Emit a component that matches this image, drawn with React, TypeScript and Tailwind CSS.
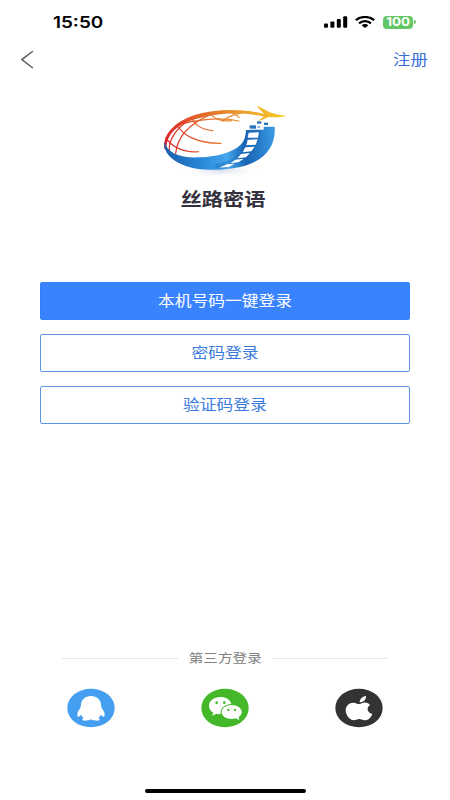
import type { ReactNode } from "react";

function StatusBar() {
  return (
    <div className="h-11 flex items-end justify-between pl-[53px] pr-[34px] pb-[13px] text-black">
      <span className="font-['Inter'] text-[16px] leading-[18px] font-semibold origin-left scale-x-[1.18]">
        15:50
      </span>
      <div className="flex items-center h-[18px]">
        <svg width="24" height="12" viewBox="0 0 24 12" fill="currentColor" aria-hidden="true">
          <rect x="0" y="7.4" width="4" height="4.3" rx="1" />
          <rect x="6.4" y="5.4" width="4" height="6.3" rx="1" />
          <rect x="12.8" y="3" width="4" height="8.7" rx="1" />
          <rect x="19.2" y="0.2" width="4" height="11.5" rx="1" />
        </svg>
        <svg className="ml-[7px]" width="20" height="12" viewBox="0 0 20 12" fill="none" stroke="currentColor" strokeWidth="2.2" aria-hidden="true">
          <path d="M0.8 4.2C6 -0.1 14 -0.1 19.2 4.2" />
          <path d="M4 7.4C7.4 4.4 12.6 4.4 16 7.4" />
          <path d="M10 12L6.6 9.3C8.6 7.6 11.4 7.6 13.4 9.3Z" fill="currentColor" stroke="none" />
        </svg>
        <div className="ml-2 w-[30px] h-[13px] rounded-[4px] bg-[#63c667] flex items-center justify-center">
          <span className="font-['Inter'] text-[11.5px] leading-[13px] font-bold text-white scale-x-[1.16]">100</span>
        </div>
        <div className="ml-px w-[2px] h-1 rounded-r-full bg-[#63c667]" />
      </div>
    </div>
  );
}

function LogoMark() {
  return (
    <svg width="140" height="85" viewBox="0 0 420 255" fill="none" aria-hidden="true">
      <defs>
        <linearGradient id="arc" x1="27" y1="150" x2="390" y2="60" gradientUnits="userSpaceOnUse">
          <stop offset="0" stopColor="#db1f2c" />
          <stop offset="0.3" stopColor="#e2602a" />
          <stop offset="0.65" stopColor="#e9992f" />
          <stop offset="1" stopColor="#f8cb25" />
        </linearGradient>
        <linearGradient id="ribbon" x1="27" y1="170" x2="362" y2="130" gradientUnits="userSpaceOnUse">
          <stop offset="0" stopColor="#1b5fae" />
          <stop offset="0.35" stopColor="#2b8cdc" />
          <stop offset="0.55" stopColor="#45a7ec" />
          <stop offset="0.72" stopColor="#1763b3" />
          <stop offset="1" stopColor="#3b9be4" />
        </linearGradient>
        <radialGradient id="shade">
          <stop offset="0" stopColor="#c9cde6" stopOpacity="0.75" />
          <stop offset="1" stopColor="#ffffff" stopOpacity="0" />
        </radialGradient>
      </defs>
      <ellipse cx="195" cy="226" rx="125" ry="24" fill="url(#shade)" />
      <g stroke="url(#arc)" strokeWidth="3.6" strokeLinecap="round">
        <path d="M32 128C48 154 84 174 130 170" />
        <path d="M67 90C82 121 128 146 198 145" />
        <path d="M112 67C114 86 136 103 173 107" />
        <path d="M165 54C174 70 200 81 230 77" />
        <path d="M47 180C34 150 50 107 115 66" />
        <path d="M62 176C65 137 91 92 166 59" />
        <path d="M66 92C110 76 190 64 252 78" />
        <path d="M220 49C237 54 247 61 252 68" />
        <path d="M202 78C225 60 252 52 286 49" />
      </g>
      <path d="M28 162C22 118 61 79 119 60C182 41 263 40 328 57L304 33C316 36 328 44 344 52C361 58 376 61 395 63C376 68 355 67 342 66C332 70 322 75 308 78C316 72 323 68 327 65C262 50 183 54 120 73C68 89 33 117 35 163Z" fill="url(#arc)" />
      <path d="M28 140C37 175 79 190 132 187C190 185 245 169 264 140C271 129 272 118 273 105L326 104L326 95L359 95C363 145 337 190 279 209C223 228 133 231 83 209C43 192 24 166 28 140Z" fill="url(#ribbon)" />
      <path d="M182 207C244 196 282 168 279 106L319 104C318 158 278 199 209 220C199 222 190 220 181 220Z" fill="#1762af" opacity="0.35" />
      <g fill="#ffffff">
        <path d="M281 113L312 112L309 128L278 128Z" />
        <path d="M278 134L308 133L302 149L274 151Z" />
        <path d="M271 157L299 155L289 169L263 172Z" />
        <path d="M258 177L285 174L273 187L247 190Z" />
        <path d="M241 194L266 191L250 202L226 205Z" />
        <path d="M216 208L240 206L221 216L193 218Z" />
      </g>
      <g fill="#2475be">
        <path d="M284 91H303V101H284Z" />
        <path d="M306 79H319V86H306Z" />
        <path d="M327 83H339V90H327Z" />
        <path d="M307 93H315V99H307Z" opacity="0.5" />
      </g>
    </svg>
  );
}

function QQIcon() {
  return (
    <svg width="48" height="40" viewBox="0 0 144 120" aria-hidden="true">
      <ellipse cx="72" cy="60" rx="71" ry="58" fill="#459ff0" />
      <path
        d="M72 24C54 24 42 36 42 51C42 58 38 62 34 69C30 76 30 86 34 86C37 86 40 82 43 80C44 84 46 87 50 90C44 92 45 97 52 98C60 98 67 97 72 94C77 97 84 98 92 98C99 97 100 92 94 90C98 87 100 84 101 80C104 82 107 86 110 86C114 86 114 76 110 69C106 62 102 58 102 51C102 36 90 24 72 24Z"
        fill="#ffffff"
      />
    </svg>
  );
}

function WeChatIcon() {
  return (
    <svg width="48" height="40" viewBox="0 0 144 120" aria-hidden="true">
      <ellipse cx="72" cy="60" rx="71" ry="58" fill="#45b829" />
      <path d="M58 27C39 27 24 38 24 53C24 62 29 69 37 74L33 83L46 77C50 78 54 79 59 78C57 61 70 49 91 48C88 35 74 27 58 27Z" fill="#ffffff" />
      <path d="M92 51C75 51 62 60 62 72C62 84 75 93 92 93C97 93 101 92 105 91L115 97L113 87C119 83 122 78 122 72C122 60 109 51 92 51Z" fill="#ffffff" />
      <g fill="#45b829">
        <circle cx="47" cy="44" r="4" />
        <circle cx="70" cy="44" r="4" />
        <circle cx="82" cy="66" r="3.5" />
        <circle cx="102" cy="66" r="3.5" />
      </g>
    </svg>
  );
}

function AppleIcon() {
  return (
    <svg width="48" height="40" viewBox="0 0 144 120" aria-hidden="true">
      <ellipse cx="72" cy="60" rx="71" ry="58" fill="#333333" />
      <g fill="#ffffff">
        <path d="M74 43C74 33 81 26 93 24C94 34 86 43 74 43Z" />
        <path d="M105 51C100 45 92 43 86 44C80 45 76 48 72 48C67 48 63 44 55 44C42 44 32 54 32 67C32 81 44 97 56 97C62 97 66 93 73 93C80 93 83 97 90 97C100 97 108 88 112 78C95 73 94 58 105 51Z" />
      </g>
    </svg>
  );
}

function LoginButton({ primary, children }: { primary?: boolean; children: ReactNode }) {
  return (
    <button
      className={
        primary
          ? "h-[38px] rounded-[2px] border border-[#3680f7] bg-[#3983ff] text-white"
          : "h-[38px] rounded-[2px] border border-[#5f96e4] bg-white text-[#3b7bdd]"
      }
    >
      <span className="block pb-0.5 text-[14.4px] leading-5 scale-x-[1.165]">{children}</span>
    </button>
  );
}

const providers = [
  { name: "QQ", icon: <QQIcon /> },
  { name: "WeChat", icon: <WeChatIcon /> },
  { name: "Apple", icon: <AppleIcon /> },
];

export default function App() {
  return (
    <div className="w-[450px] h-[800px] bg-white flex flex-col overflow-hidden font-['Noto_Sans_CJK_SC',sans-serif]">
      <StatusBar />

      <header className="h-8 flex items-center justify-between pl-5 pr-[22px]">
        <button aria-label="Back">
          <svg width="14" height="20" viewBox="0 0 14 20" fill="none" stroke="#555555" strokeWidth="1.4" aria-hidden="true">
            <path d="M12.8 1.2L1.8 9.6L12.8 18" />
          </svg>
        </button>
        <button className="pb-0.5 text-[15px] leading-5 text-[#3a6fd8] origin-right scale-x-[1.165]">注册</button>
      </header>

      <div className="mt-[19px] flex flex-col items-center">
        <LogoMark />
        <h1 className="mt-[5px] mb-px ml-[-4px] text-[18px] leading-[26px] font-bold text-[#33313d] scale-x-[1.18]">丝路密语</h1>
      </div>

      <main className="mt-[70px] mx-10 flex flex-col gap-3.5">
        <LoginButton primary>本机号码一键登录</LoginButton>
        <LoginButton>密码登录</LoginButton>
        <LoginButton>验证码登录</LoginButton>
      </main>

      <footer className="mt-auto flex flex-col">
        <div className="mx-[62px] flex items-center">
          <div className="h-px flex-1 bg-[#e6e6e6]" />
          <span className="w-[94px] text-center text-[12.5px] leading-5 text-[#808080]">
            <span className="inline-block scale-x-[1.17]">第三方登录</span>
          </span>
          <div className="h-px flex-1 bg-[#e6e6e6]" />
        </div>
        <div className="mt-5 px-[67px] flex justify-between">
          {providers.map((p) => (
            <button key={p.name} aria-label={p.name}>
              {p.icon}
            </button>
          ))}
        </div>
        <div className="mt-[61px] mb-[7px] mx-auto w-[161px] h-1 rounded-full bg-black" />
      </footer>
    </div>
  );
}
